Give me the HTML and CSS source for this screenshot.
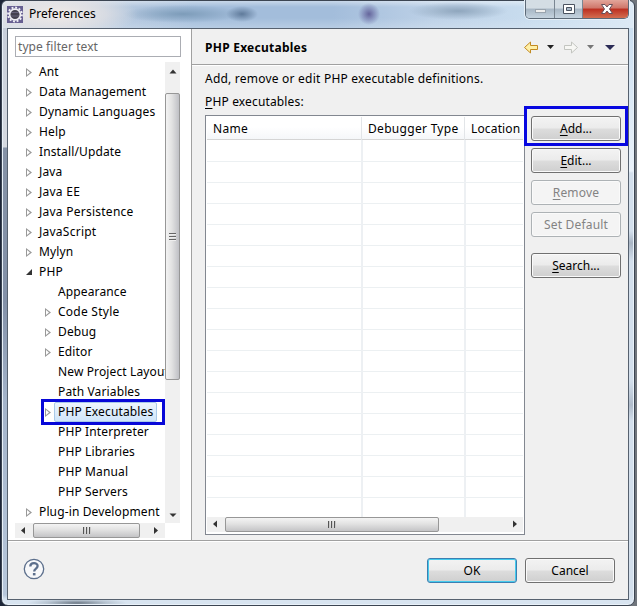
FILE: index.html
```html
<!DOCTYPE html>
<html lang="en">
<head>
<meta charset="utf-8">
<title>Preferences</title>
<link rel="stylesheet" href="styles.css">
</head>
<body>
<div class="window">
  <header class="titlebar">
    <svg class="app-icon" width="16" height="17" viewBox="0 0 16 17"><rect width="16" height="17" fill="#665f91"/><circle cx="8" cy="8.5" r="7" fill="none" stroke="#f1f1f7" stroke-width="1.8" stroke-dasharray="1.900 1.760"/><circle cx="8" cy="8.5" r="5.400" fill="#45424f" stroke="#eeeef2" stroke-width="1.700"/><path d="M4 6.500h8M4 10h8" stroke="#66627a"/></svg>
    <span class="title">Preferences</span>
    <div class="caption">
      <span class="cap"><svg width="28" height="18"><rect x="9.500" y="9.500" width="10" height="3" fill="#eee" stroke="#9aa4ae"/></svg></span>
      <span class="cap"><svg width="27" height="18"><path d="M8.500 4.500h11v9h-11z" fill="#fff" stroke="#4b5360"/><path d="M11.500 7.500h5v3h-5z" fill="#a9b9c8" stroke="#4b5360"/></svg></span>
      <span class="cap cap-close"><svg width="47" height="18"><path d="M18.500 4.500h3.500l2 2.500 2-2.500h3.500L26.500 9l3 4.500H26L24 11l-2 2.500h-3.500l3-4.500z" fill="#fff" stroke="#65505a"/></svg></span>
    </div>
  </header>
  <main class="client">
    <div class="panes">
      <aside class="sidebar">
        <div class="filter">type filter text</div>
        <div class="tree-box">
          <ul class="tree">
            <li><i class="tw"></i><span>Ant</span></li>
            <li><i class="tw"></i><span>Data Management</span></li>
            <li><i class="tw"></i><span>Dynamic Languages</span></li>
            <li><i class="tw"></i><span>Help</span></li>
            <li><i class="tw"></i><span>Install/Update</span></li>
            <li><i class="tw"></i><span>Java</span></li>
            <li><i class="tw"></i><span class="wide">Java EE</span></li>
            <li><i class="tw"></i><span class="wide">Java Persistence</span></li>
            <li><i class="tw"></i><span class="wide">JavaScript</span></li>
            <li><i class="tw"></i><span>Mylyn</span></li>
            <li><i class="tw open"></i><span>PHP</span></li>
            <li class="sub"><i class="tw none"></i><span>Appearance</span></li>
            <li class="sub"><i class="tw"></i><span class="wide">Code Style</span></li>
            <li class="sub"><i class="tw"></i><span>Debug</span></li>
            <li class="sub"><i class="tw"></i><span>Editor</span></li>
            <li class="sub"><i class="tw none"></i><span>New Project Layout</span></li>
            <li class="sub"><i class="tw none"></i><span>Path Variables</span></li>
            <li class="sub selected"><i class="tw"></i><span>PHP Executables</span></li>
            <li class="sub"><i class="tw none"></i><span>PHP Interpreter</span></li>
            <li class="sub"><i class="tw none"></i><span>PHP Libraries</span></li>
            <li class="sub"><i class="tw none"></i><span>PHP Manual</span></li>
            <li class="sub"><i class="tw none"></i><span>PHP Servers</span></li>
            <li><i class="tw"></i><span>Plug-in Development</span></li>
          </ul>
          <div class="vscroll">
            <svg class="arrow" width="15" height="31"><path d="M4.500 11.500h7L8 7.500z" fill="#333"/></svg>
            <div class="vthumb"><i></i><i></i><i></i></div>
            <svg class="arrow" width="15" height="16"><path d="M4.500 6.500h7L8 10z" fill="#333"/></svg>
          </div>
          <div class="hscroll">
            <svg width="18" height="15"><path d="M10 4v7l-4-3.500z" fill="#333"/></svg>
            <div class="hthumb tree-thumb"><i></i><i></i><i></i></div>
            <svg width="25" height="15"><path d="M14 4v7l4-3.500z" fill="#333"/></svg>
          </div>
        </div>
      </aside>
      <section class="page">
        <div class="page-head">
          <h1>PHP Executables</h1>
          <svg width="100" height="20" viewBox="0 0 100 20"><path d="M4.500 9.500l6-5.500v3.500h7v4h-7V15z" fill="#fff0a8" stroke="#c28a22" stroke-linejoin="round"/><path d="M27 7h7l-3.500 4z" fill="#222"/><path d="M57.500 9.500l-6-5.500v3.500h-7v4h7V15z" fill="#f7f7f4" stroke="#c3c5c0" stroke-linejoin="round"/><path d="M67 7h7l-3.500 4z" fill="#777"/><path d="M85 7h10l-5 5z" fill="#2b2b55"/></svg>
        </div>
        <p class="desc">Add, remove or edit PHP executable definitions.</p>
        <p class="label"><u>P</u>HP executables:</p>
        <div class="work">
          <div class="table">
            <div class="thead"><span>Name</span><span>Debugger Type</span><span>Location</span></div>
            <div class="tbody"><span></span><span></span><span></span></div>
            <div class="hscroll table-scroll">
              <svg width="18" height="15"><path d="M10 3.500v7l-4-3.500z" fill="#333"/></svg>
              <div class="hthumb table-thumb"><i></i><i></i><i></i></div>
              <svg class="end" width="18" height="15"><path d="M8 3.500v7l4-3.500z" fill="#333"/></svg>
            </div>
          </div>
          <div class="actions">
            <button class="marked"><u>A</u>dd...</button>
            <button><u>E</u>dit...</button>
            <button disabled><u>R</u>emove</button>
            <button disabled>Set Default</button>
            <button class="search"><u>S</u>earch...</button>
          </div>
        </div>
      </section>
    </div>
    <footer class="footer">
      <svg class="help" width="22" height="22" viewBox="0 0 22 22"><circle cx="11" cy="11" r="9.700" fill="#f7f8fa" stroke="#5c6f8c" stroke-width="1.300"/><path d="M7.300 8.400C7.300 4 14.700 4.200 14.600 8c0 2.500-3.400 2.600-3.400 5.400" fill="none" stroke="#5c6f8c" stroke-width="2.300"/><rect x="9.900" y="15" width="2.600" height="2.400" fill="#5c6f8c"/></svg>
      <button class="ok">OK</button>
      <button>Cancel</button>
    </footer>
  </main>
</div>
</body>
</html>
```
FILE: styles.css
```css
*, *::before, *::after { box-sizing: border-box; }
body { margin: 0; width: 637px; height: 606px; overflow: hidden; padding: 0 2px 0 1px; background: linear-gradient(90deg, #1d2638 50%, #70757c 50%); font: 12px/20px "Noto Sans", "Open Sans", sans-serif; color: #000; }
h1, p, ul { margin: 0; padding: 0; font-weight: normal; }
u { text-underline-offset: 2px; }
.window { height: 606px; border: 1px solid #3c4552; border-radius: 6px 6px 7px 7px; padding: 0 5px 6px; background: radial-gradient(ellipse 50px 5px at 75px 602px, #6f7b88, #9aa8b680 60%, #0000), linear-gradient(#0000 594px, #d8e4f0 598px), linear-gradient(#c4ccd9, #d5d9e0 146px, #8592a6 147px, #8391a8 300px, #a4b4ca 400px, #b8c8dc 600px) 0 0 / 50% 100% no-repeat, linear-gradient(#c6dbee, #eaf2fa 170px, #d3dfec 172px 230px, #a9b5c4 242px, #d3dfec 260px 380px, #b0bccb 404px, #d3dfec 420px) 100% 0 / 50% 100% no-repeat; box-shadow: inset 0 0 0 1px #e9f1f9; }
.titlebar { height: 27px; display: flex; position: relative; margin: 0 -4px; padding: 5px 0 0 4px; border-radius: 5px 5px 0 0; background: radial-gradient(ellipse 80px 24px at 55px 13px, #f1ebe7, #e4e2e4b0 60%, #fff0), radial-gradient(circle 11px at 366px 13px, #65659c, #7479ac80 60%, #0000), radial-gradient(ellipse 16px 8px at 239px 13px, #5f7a9a, #5f7a9a00), radial-gradient(ellipse 60px 9px at 180px 13px, #7d9cb9, #7d9cb900), radial-gradient(ellipse 50px 9px at 455px 10px, #8fa6bd, #8fa6bd00), linear-gradient(#ffffff66, #fff0 6px 17px, #dfeaf455), linear-gradient(90deg, #d5dce5, #a3bddb 190px 330px, #bdd1e7 430px, #cbdff0 550px, #dce9f5); }
.app-icon { display: block; }
.title { margin: -2px 0 0 6px; }
.caption { position: absolute; top: -1px; right: 4px; width: 104px; height: 19px; display: flex; border: 1px solid #5d6a78; border-top: 0; border-radius: 0 0 5px 5px; overflow: hidden; box-shadow: 0 0 0 1px #e7f0f8; }
.cap { flex: 0 0 28px; height: 18px; background: linear-gradient(#d4dde4 45%, #a7b6c4 50%, #c5d3df); border-right: 1px solid #7a8692; }
.cap svg { display: block; }
.cap:nth-child(2) { flex-basis: 27px; }
.cap-close { flex-basis: 47px; border: 0; background: linear-gradient(#e2a69b, #cf7669 45%, #bc2f20 50%, #d36e50); }
.client { height: 572px; border: 1px solid #56616f; background: #f0f0f0; }
.panes { height: 512px; display: flex; border-bottom: 1px solid #a0a0a0; }
.sidebar { flex: 0 0 184px; padding: 7px 10px 0 7px; background: #fff; border-right: 1px solid #a0a0a0; }
.filter { width: 166px; height: 21px; border: 1px solid #abadb3; padding-left: 2px; line-height: 19px; color: #666; letter-spacing: .08px; }
.tree-box { display: grid; grid-template: 461px 15px / 150px 15px; margin-top: 5px; }
.tree { list-style: none; overflow: hidden; letter-spacing: .13px; }
.tree li { height: 20px; display: flex; white-space: nowrap; padding-left: 10px; line-height: 19px; }
.tree .sub { padding-left: 29px; }
.tree span { padding: 0 3px; margin-left: 1px; }
.tree .wide { letter-spacing: .25px; }
.tw { flex: 0 0 10px; position: relative; }
.tw::before { content: ""; position: absolute; left: 1px; top: 6px; width: 6px; height: 9px; background: #999; clip-path: polygon(0 0, 100% 50%, 0 100%); }
.tw::after { content: ""; position: absolute; left: 2px; top: 8px; width: 3px; height: 5px; background: #fff; clip-path: polygon(0 0, 100% 50%, 0 100%); }
.none::before, .none::after, .open::after { display: none; }
.open::before { top: 7px; height: 6px; background: #333; clip-path: polygon(100% 0, 100% 100%, 0 100%); }
.tree .selected { position: relative; }
.tree .selected span { height: 20px; margin-left: 0; padding-left: 3px; border: 1px solid #a9c9e8; border-radius: 2px; background: linear-gradient(#edf5fd, #d0e5fa); line-height: 18px; }
.selected::after { content: ""; position: absolute; left: 26px; top: -3px; width: 124px; height: 26px; border: 3px solid #0707d8; }
.vscroll { background: #f0f0f0; display: flex; flex-direction: column; }
.arrow { flex: none; }
.vthumb { height: 287px; border: 1px solid #979797; border-radius: 2px; background: linear-gradient(90deg, #f3f3f3, #e2e2e2 45%, #bfc0c5); display: flex; flex-direction: column; justify-content: center; align-items: center; gap: 1px; }
.vthumb i { width: 7px; height: 2px; background: #666; border-bottom: 1px solid #eee; }
.vthumb + .arrow { margin-top: auto; }
.hscroll { height: 15px; display: flex; background: #f0f0f0; }
.hthumb { height: 15px; border: 1px solid #979797; border-radius: 2px; background: linear-gradient(#f4f4f4, #e2e2e2 45%, #c4c4c6); display: flex; align-items: center; justify-content: center; gap: 1px; }
.hthumb i { width: 2px; height: 7px; background: #555; border-right: 1px solid #ccc; }
.tree-thumb { width: 107px; }
.table-thumb { width: 214px; }
.end { margin-left: auto; }
.page { flex: 1; min-width: 0; }
.page-head { height: 36px; padding: 9px 3px 0 13px; border-bottom: 1px solid #a0a0a0; box-shadow: 0 1px #fff; display: flex; justify-content: space-between; }
.page-head svg { margin-right: 5px; }
h1 { font-size: 12px; font-weight: bold; letter-spacing: .25px; }
.desc { margin: 4px 0 0 13px; letter-spacing: .22px; }
.label { margin: 3px 0 0 13px; height: 23px; line-height: 19px; letter-spacing: .15px; }
.work { display: flex; padding-left: 13px; }
.table { width: 320px; height: 420px; border: 1px solid #828790; background: #fff; padding: 1px; display: flex; flex-direction: column; }
.thead { height: 23px; display: grid; grid-template-columns: 155px 103px 58px; border-bottom: 1px solid #d5d5d5; background: linear-gradient(#fff 45%, #f5f7f9); line-height: 23px; white-space: nowrap; }
.thead span { padding-left: 6px; border-right: 1px solid #e2e5e8; letter-spacing: .3px; }
.thead span:last-child { border: 0; letter-spacing: .15px; }
.tbody { height: 377px; display: grid; grid-template-columns: 156px 103px 57px; background: repeating-linear-gradient(#fff 0 20px, #ecf0f2 20px 21px) 0 1px; }
.tbody span:not(:last-child) { border-right: 2px solid #edf0f3; }
.table-scroll { margin-top: 0; }
.actions { display: flex; flex-direction: column; gap: 7px; padding: 1px 0 0 6px; }
button { width: 90px; height: 25px; padding: 0; border: 1px solid #707070; border-radius: 3px; background: linear-gradient(#f3f3f3, #ebebeb 49%, #ddd 51%, #cfcfcf); box-shadow: inset 0 0 0 1px #fafafa; color: #000; font: inherit; position: relative; }
button:disabled { border-color: #adb2b5; background: #f4f4f4; color: #838383; letter-spacing: .2px; }
.search { margin-top: 9px; }
.marked::after { content: ""; position: absolute; left: -8px; top: -11px; width: 104px; height: 40px; border: 3px solid #0707e0; }
.footer { height: 58px; display: flex; padding: 17px 13px 0 15px; gap: 8px; box-shadow: inset 0 1px #fff; }
.help { margin-right: auto; }
.ok { border-color: #3c7fb1; box-shadow: inset 0 0 0 1px #45cbed; }
```
